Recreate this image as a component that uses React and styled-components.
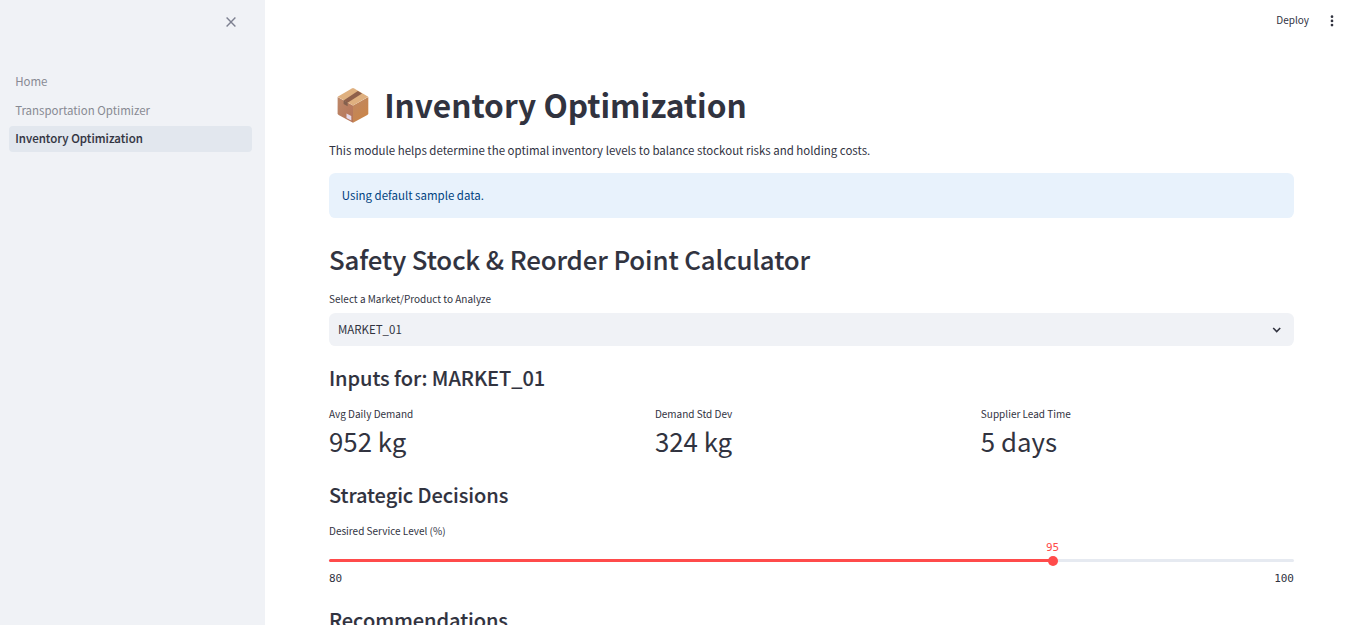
import React from "react";
import styled, { createGlobalStyle } from "styled-components";

const sans = '"Noto Sans CJK SC", "Noto Sans", sans-serif';
const mono = '"DejaVu Sans Mono", "Liberation Mono", monospace';

const GlobalStyle = createGlobalStyle`
  * { box-sizing: border-box; }
  html, body { margin: 0; height: 100%; overflow: hidden; }
  body { background: #fff; color: #31333f; font-family: ${sans}; font-size: 11.48px; }
  h1, h2, h3, p { margin: 0; }
`;

const Shell = styled.div`
  display: flex;
  height: 625px;
  overflow: hidden;
`;

const Sidebar = styled.aside`
  flex: 0 0 265px;
  background: #f0f2f6;
`;

const SidebarHeader = styled.div`
  display: flex;
  justify-content: flex-end;
  height: 69px;
  padding: 16px 28px 0 0;
  svg { display: block; }
`;

const Nav = styled.nav`
  display: flex;
  flex-direction: column;
  gap: 2.6px;
  padding: 0 13px 0 9px;
`;

const NavItem = styled.a`
  display: block;
  height: 26px;
  padding-left: 6.2px;
  border-radius: 4px;
  line-height: 25.4px;
  color: ${(p) => (p.$active ? "#31333f" : "#888a93")};
  background: ${(p) => (p.$active ? "#e2e7ee" : "transparent")};
  font-weight: ${(p) => (p.$active ? 500 : 400)};
  letter-spacing: ${(p) => (p.$active ? "0.03px" : "0")};
  -webkit-text-stroke: ${(p) => (p.$active ? "0.1px" : "0")};
`;

const Main = styled.main`
  position: relative;
  flex: 1;
  padding: 83px 67px 0 64px;
`;

const Toolbar = styled.header`
  position: absolute;
  top: 0;
  right: 0;
  display: flex;
  align-items: center;
  gap: 18px;
  height: 40px;
  padding-right: 24px;
  font-size: 10px;
  line-height: 14px;
  span { padding-bottom: 1px; }
`;

const Title = styled.h1`
  display: flex;
  align-items: center;
  height: 42px;
  font-size: 31.6px;
  line-height: 42px;
  font-weight: 700;
  svg { margin: 1px 14.6px 0 6.6px; }
`;

const Lead = styled.p`
  margin-top: 15px;
  line-height: 20px;
`;

const Alert = styled.div`
  height: 45px;
  margin-top: 13px;
  padding-left: 12.8px;
  border-radius: 6.4px;
  background: #e8f2fc;
  color: #004280;
  line-height: 44px;
`;

const Heading = styled.h2`
  margin-top: 24px;
  font-size: 25.8px;
  line-height: 34px;
  font-weight: 500;
  letter-spacing: -0.1px;
  -webkit-text-stroke: 0.1px;
`;

const Subheading = styled.h3`
  margin-top: ${(p) => p.$gap}px;
  font-size: 20.05px;
  line-height: 28px;
  font-weight: 500;
  letter-spacing: -0.07px;
  -webkit-text-stroke: 0.1px;
`;

const Label = styled.div`
  margin-top: ${(p) => p.$gap ?? 13}px;
  font-size: 10px;
  line-height: 18px;
`;

const Select = styled.div`
  display: flex;
  align-items: center;
  justify-content: space-between;
  height: 33px;
  margin-top: 5px;
  padding: 0 12px 0 9px;
  border-radius: 6.4px;
  background: #f0f2f6;
  line-height: 31px;
`;

const Metrics = styled.div`
  display: grid;
  grid-template-columns: repeat(3, 1fr);
  gap: 12.8px;
`;

const MetricValue = styled.div`
  margin-top: 1px;
  font-size: 25.8px;
  line-height: 34px;
`;

const Slider = styled.div`
  height: 46px;
  padding-top: 19px;
  font-family: ${mono};
  font-size: 11px;
`;

const Track = styled.div`
  position: relative;
  height: 3px;
  border-radius: 2px;
  background: #e6eaf1;
`;

const Fill = styled.div`
  height: 3px;
  border-radius: 2px;
  background: #ff4b4b;
`;

const Thumb = styled.div`
  position: absolute;
  top: -3px;
  width: 10px;
  height: 10px;
  margin-left: -5.2px;
  border-radius: 50%;
  background: #ff4b4b;
`;

const ThumbValue = styled.span`
  position: absolute;
  bottom: 12px;
  left: 50%;
  transform: translateX(-50%);
  line-height: 12px;
  color: #ff4b4b;
`;

const Ticks = styled.div`
  display: flex;
  justify-content: space-between;
  margin-top: 10px;
  line-height: 14px;
`;

const CloseIcon = () => (
  <svg width="12" height="12" viewBox="0 0 12 12" fill="none" stroke="#7d8090" strokeWidth="1.4">
    <path d="M1.6 1.6 10.4 10.4M10.4 1.6 1.6 10.4" />
  </svg>
);

const MoreIcon = () => (
  <svg width="10" height="14" viewBox="0 0 10 14" fill="#31333f">
    <circle cx="5" cy="3.7" r="1.35" />
    <circle cx="5" cy="7.9" r="1.35" />
    <circle cx="5" cy="12.1" r="1.35" />
  </svg>
);

const ChevronIcon = () => (
  <svg width="10" height="8" viewBox="0 0 10 8" fill="none" stroke="#31333f" strokeWidth="1.6">
    <path d="M1.2 2 4.7 5.5 8.2 2" />
  </svg>
);

const PackageIcon = () => (
  <svg width="34" height="36" viewBox="0 0 34 36">
    <defs>
      <linearGradient id="left" x1="0" y1="0" x2="1" y2="1">
        <stop offset="0" stopColor="#bd8869" />
        <stop offset="1" stopColor="#b57358" />
      </linearGradient>
      <linearGradient id="right" x1="0" y1="0" x2="0.6" y2="1">
        <stop offset="0" stopColor="#bd8764" />
        <stop offset="1" stopColor="#cb8548" />
      </linearGradient>
    </defs>
    <path d="M1.6 10 17 18.6V35.8L2.6 27.9Q1.6 27.3 1.6 26.2Z" fill="url(#left)" />
    <path d="M32.3 10 17 18.6V35.8L31.3 27.9Q32.3 27.3 32.3 26.2Z" fill="url(#right)" />
    <path d="M1.6 9.8 15.8 1.4Q17 .7 18.2 1.4L32.3 9.8 17 18.6Z" fill="#dfb07f" />
    <path d="M7.6 13.6 21.8 4 26 6.4 11.6 15.8Z" fill="#8f604b" />
    <path d="M7.6 13.2 11.6 15.5V19.2L7.6 17Z" fill="#84604e" />
    <path d="M10.5 26.6 15.3 28.9V33.4L10.5 30.9Z" fill="#e5d8e8" />
  </svg>
);

const metrics = [
  ["Avg Daily Demand", "952 kg"],
  ["Demand Std Dev", "324 kg"],
  ["Supplier Lead Time", "5 days"],
];

const min = 80;
const max = 100;
const level = 95;
const percent = `${((level - min) / (max - min)) * 100}%`;

export default function App() {
  return (
    <Shell>
      <GlobalStyle />
      <Sidebar>
        <SidebarHeader><CloseIcon /></SidebarHeader>
        <Nav>
          <NavItem>Home</NavItem>
          <NavItem>Transportation Optimizer</NavItem>
          <NavItem $active>Inventory Optimization</NavItem>
        </Nav>
      </Sidebar>
      <Main>
        <Toolbar>
          <span>Deploy</span>
          <MoreIcon />
        </Toolbar>
        <Title><PackageIcon />Inventory Optimization</Title>
        <Lead>This module helps determine the optimal inventory levels to balance stockout risks and holding costs.</Lead>
        <Alert>Using default sample data.</Alert>
        <Heading>Safety Stock &amp; Reorder Point Calculator</Heading>
        <Label $gap={14}>Select a Market/Product to Analyze</Label>
        <Select>MARKET_01<ChevronIcon /></Select>
        <Subheading $gap={18}>Inputs for: MARKET_01</Subheading>
        <Metrics>
          {metrics.map(([name, value]) => (
            <div key={name}>
              <Label>{name}</Label>
              <MetricValue>{value}</MetricValue>
            </div>
          ))}
        </Metrics>
        <Subheading $gap={23}>Strategic Decisions</Subheading>
        <Label>Desired Service Level (%)</Label>
        <Slider>
          <Track>
            <Fill style={{ width: percent }} />
            <Thumb style={{ left: percent }}>
              <ThumbValue>{level}</ThumbValue>
            </Thumb>
          </Track>
          <Ticks><span>{min}</span><span>{max}</span></Ticks>
        </Slider>
        <Subheading $gap={20}>Recommendations</Subheading>
      </Main>
    </Shell>
  );
}
